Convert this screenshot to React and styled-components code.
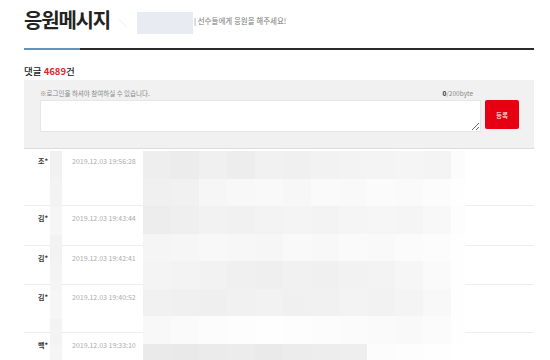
import React from "react";
import styled, { createGlobalStyle } from "styled-components";

const GlobalStyle = createGlobalStyle`
  html, body {
    margin: 0;
    padding: 0;
    background: #fff;
  }
  body {
    font-family: "Noto Sans CJK KR", "Noto Sans", sans-serif;
    color: #222;
    overflow: hidden;
  }
`;

const comments = [
  { name: "조*", date: "2019.12.03 19:56:28", height: 57 },
  { name: "김*", date: "2019.12.03 19:43:44", height: 40 },
  { name: "김*", date: "2019.12.03 19:42:41", height: 39 },
  { name: "김*", date: "2019.12.03 19:40:52", height: 48 },
  { name: "백*", date: "2019.12.03 19:33:10", height: 48 },
];

// blurred message area, 11 tiles across + white edge
const mosaic = [
  [238, 236, 240, 237, 241, 240, 242, 243, 244, 245, 244, 252],
  [240, 241, 246, 248, 249, 247, 250, 249, 251, 250, 252, 254],
  [237, 239, 242, 241, 243, 244, 243, 245, 246, 245, 248, 253],
  [245, 246, 248, 247, 246, 249, 248, 250, 249, 251, 252, 254],
  [244, 243, 242, 240, 239, 241, 240, 242, 243, 246, 250, 254],
  [241, 240, 239, 241, 242, 240, 241, 243, 242, 244, 248, 254],
  [248, 250, 252, 253, 254, 253, 252, 251, 250, 249, 251, 254],
  [234, 233, 235, 236, 234, 236, 237, 238, 252, 253, 254, 255],
];

const strip = [241, 243, 246, 242, 244, 246, 243, 245, 246];

export default function App() {
  return (
    <Page>
      <GlobalStyle />
      <Header>
        <Title>응원메시지</Title>
        <Slash />
        <BlurName />
        <Subtitle>| 선수들에게 응원을 해주세요!</Subtitle>
      </Header>
      <Rule />
      <Count>
        댓글 <b>4689</b>건
      </Count>
      <WritePanel>
        <Notice>※로그인을 하셔야 참여하실 수 있습니다.</Notice>
        <Counter>
          <b>0</b>/200byte
        </Counter>
        <Input />
        <Submit>등록</Submit>
      </WritePanel>
      <CommentList>
        {comments.map((c, i) => (
          <CommentRow key={i} $height={c.height}>
            <Name>{c.name}</Name>
            <Date>{c.date}</Date>
          </CommentRow>
        ))}
        <Strip>
          {strip.map((s, i) => (
            <Tile key={i} $shade={s} />
          ))}
        </Strip>
        <Mosaic>
          {mosaic.flat().map((s, i) => (
            <Tile key={i} $shade={s} />
          ))}
        </Mosaic>
      </CommentList>
    </Page>
  );
}

const Page = styled.div`
  width: 510px;
  padding: 0 16px 0 24px;
`;

const Header = styled.div`
  display: flex;
  align-items: center;
  height: 36px;
  padding-top: 2px;
`;

const Title = styled.h1`
  margin: 0;
  font-size: 20px;
  font-weight: 700;
  letter-spacing: -1.2px;
  color: #222;
  line-height: 28px;
`;

const Slash = styled.span`
  width: 1px;
  height: 12px;
  margin: 6px 0 0 12px;
  background: #f3f0eb;
  transform: rotate(-45deg);
`;

const BlurName = styled.span`
  width: 56px;
  height: 22px;
  margin: 6px 0 0 14px;
  background: #e8ecf2;
`;

const Subtitle = styled.span`
  font-size: 7.5px;
  color: #777;
  margin: 0 0 0 1px;
`;

const Rule = styled.div`
  height: 2px;
  margin-top: 10px;
  background: linear-gradient(to right, #6392bb 0 56px, #2a2a2a 56px);
`;

const Count = styled.div`
  margin-top: 15px;
  font-size: 9.5px;
  font-weight: 500;
  color: #222;
  line-height: 13px;
  b {
    color: #d9262b;
    font-weight: 700;
  }
`;

const WritePanel = styled.div`
  display: grid;
  grid-template-columns: 1fr 34px;
  grid-template-rows: 14px 31px;
  column-gap: 4px;
  margin-top: 2px;
  padding: 6px 15px 17px 16px;
  background: #f1f1f1;
  border-bottom: 1px solid #dcdcdc;
`;

const Notice = styled.div`
  grid-column: 1;
  grid-row: 1;
  font-size: 6.5px;
  color: #888;
  line-height: 14px;
`;

const Counter = styled.div`
  grid-column: 1;
  grid-row: 1;
  justify-self: end;
  margin-right: 8px;
  font-size: 6.5px;
  color: #888;
  line-height: 14px;
  b {
    color: #333;
    font-weight: 700;
  }
`;

const Input = styled.textarea`
  grid-column: 1;
  grid-row: 2;
  margin: 0;
  border: 1px solid #e6e6e6;
  background: #fff;
  resize: vertical;
  padding: 0;
  height: 30px;
`;

const Submit = styled.button`
  grid-column: 2;
  grid-row: 2;
  height: 29px;
  margin: 0;
  border: none;
  border-radius: 2px;
  background: #e60012;
  color: #fff;
  font-family: inherit;
  font-size: 6.5px;
  padding: 0;
`;

const CommentList = styled.div`
  position: relative;
  overflow: hidden;
`;

const CommentRow = styled.div`
  display: flex;
  align-items: flex-start;
  gap: 20px;
  height: ${(p) => p.$height}px;
  box-sizing: border-box;
  padding: 7px 0 0 14px;
  border-bottom: 1px solid #ededed;
  font-size: 7px;
  line-height: 10px;
`;

const Name = styled.span`
  width: 14px;
  color: #333;
  font-weight: 700;
`;

const Date = styled.span`
  color: #ababab;
`;

const Strip = styled.div`
  position: absolute;
  left: 26px;
  top: 2px;
  width: 12px;
  display: grid;
  grid-auto-rows: 28px;
`;

const Mosaic = styled.div`
  position: absolute;
  left: 119px;
  top: 2px;
  display: grid;
  grid-template-columns: repeat(11, 28px) 14px;
  grid-auto-rows: 27.5px;
`;

const Tile = styled.div`
  background: rgb(${(p) => p.$shade}, ${(p) => p.$shade}, ${(p) => p.$shade});
`;
